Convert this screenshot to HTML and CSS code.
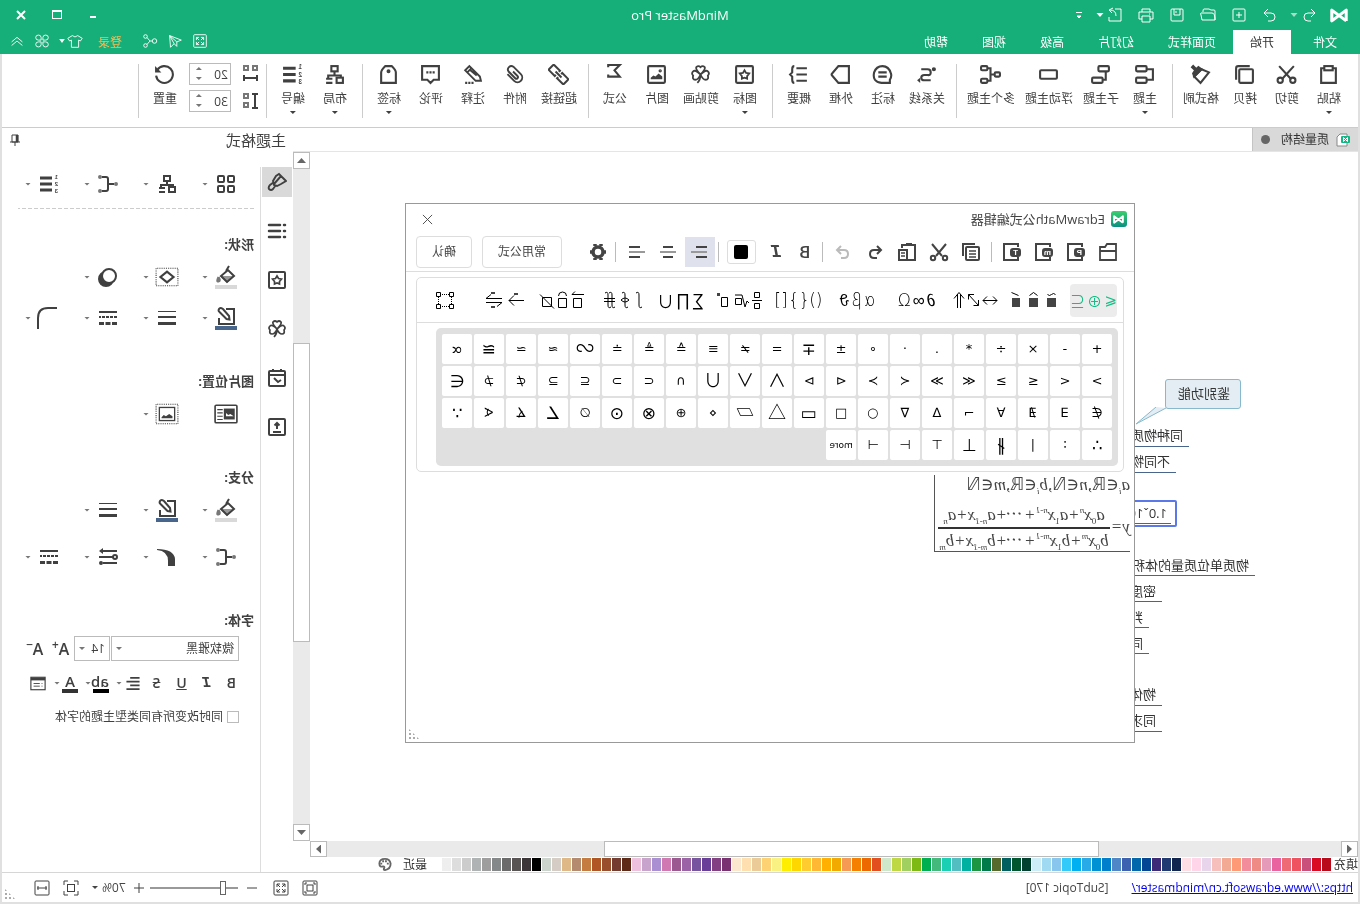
FILE: index.html
```html
<!DOCTYPE html>
<html lang="zh-CN">
<head>
<meta charset="utf-8">
<title>MindMaster Pro</title>
<link rel="stylesheet" href="styles.css">
</head>
<body>
<svg class="sprite" aria-hidden="true">
  <symbol id="logo" viewBox="0 0 20 16"><path d="M2 14V2l16 12V2L2 14" fill="none" stroke="currentColor" stroke-width="3.4" stroke-linejoin="round"/></symbol>
  <symbol id="undo" viewBox="0 0 20 20"><path d="M8 4 4 8l4 4M4 8h7q4 0 4 4t-4 4H8"/></symbol>
  <symbol id="redo" viewBox="0 0 20 20"><path d="m12 4 4 4-4 4m4-4H9q-4 0-4 4t4 4h3"/></symbol>
  <symbol id="new" viewBox="0 0 20 20"><rect x="4" y="4" width="12" height="12" rx="1"/><path d="M10 7v6M7 10h6"/></symbol>
  <symbol id="open" viewBox="0 0 20 20"><path d="M3 15V6q0-1 1-1h3l2-1h5q1 0 1 2v1M3 15q0-7 3-7h11q1 0 0 2l-1 5z"/></symbol>
  <symbol id="save" viewBox="0 0 20 20"><rect x="4" y="4" width="12" height="12" rx="1"/><path d="M7 4v6h6V4M11 6v2"/></symbol>
  <symbol id="print" viewBox="0 0 20 20"><path d="M6 7V4h8v3M6 14H3V7h14v7h-3M6 11h8v6H6zM6 9h1"/></symbol>
  <symbol id="export" viewBox="0 0 20 20"><path d="M10 4H4v12h12v-4M9 11q0-6 6-6m-3-2 4 2-3 3"/></symbol>
  <symbol id="custom" viewBox="0 0 10 10"><path d="M2 2.500h6M3 6h4L5 8z" fill="currentColor"/></symbol>
  <symbol id="full" viewBox="0 0 20 20"><rect x="3" y="3" width="14" height="14" rx="1"/><path d="M6 9V6h3M11 6h3v3M14 11v3h-3M9 14H6v-3M6 6l3 3M14 6l-3 3M14 14l-3-3M6 14l3-3"/></symbol>
  <symbol id="send" viewBox="0 0 20 20"><path d="m16 4-1 13-4-4-3 3v-5L3 9zM8 11l8-7-5 9"/></symbol>
  <symbol id="share" viewBox="0 0 20 20"><circle cx="5" cy="10" r="2.500"/><circle cx="15" cy="5" r="2"/><circle cx="15" cy="15" r="2"/><path d="M7.500 10H10l3.500-4M10 10l3.500 4"/></symbol>
  <symbol id="shirt" viewBox="0 0 20 20"><path d="M7 4 2 7l2 3 2-1v8h8V9l2 1 2-3-5-3q-3 3-6 0z"/></symbol>
  <symbol id="apps" viewBox="0 0 20 20"><path d="M9 9H6a3 2.800 0 1 1 3-3zM11 9h3a3 2.800 0 1 0-3-3zM9 11H6a3 2.800 0 1 0 3 3zM11 11h3a3 2.800 0 1 1-3 3z"/></symbol>
  <symbol id="chev" viewBox="0 0 20 20"><path d="m4 11 6-5 6 5M4 15l6-5 6 5"/></symbol>

  <symbol id="paste" viewBox="0 0 20 20"><path d="M6 4H3v14h14V4h-3"/><rect x="6" y="2" width="8" height="4"/></symbol>
  <symbol id="cut" viewBox="0 0 20 20"><path d="m3 2 11 12M17 2 6 14"/><circle cx="4" cy="15.500" r="2.500"/><circle cx="16" cy="15.500" r="2.500"/></symbol>
  <symbol id="copy" viewBox="0 0 20 20"><rect x="2" y="5" width="13" height="13" rx="1"/><path d="M5 2h11q2 0 2 2v11"/></symbol>
  <symbol id="brush" viewBox="0 0 20 20"><path d="m2 8 7-3 7 7-6 6z"/><path d="m9 5 3-2 2 2 3-3 1 1-3 3 2 3-1 3z" fill="currentColor"/></symbol>
  <symbol id="topic" viewBox="0 0 20 20"><rect x="8" y="2" width="10" height="5" rx="1"/><rect x="8" y="13" width="10" height="5" rx="1"/><path d="M8 5H2v10h6"/></symbol>
  <symbol id="subtopic" viewBox="0 0 20 20"><rect x="2" y="2" width="10" height="5" rx="1"/><rect x="8" y="13" width="10" height="5" rx="1"/><path d="M5 7v8h3"/></symbol>
  <symbol id="float" viewBox="0 0 20 20"><rect x="2" y="6" width="16" height="8" rx="1"/></symbol>
  <symbol id="multi" viewBox="0 0 20 20"><rect x="1" y="8" width="5" height="4" rx="1"/><rect x="13" y="2" width="6" height="4" rx="1"/><rect x="13" y="14" width="6" height="4" rx="1"/><path d="M6 10h4M13 4h-3v12h3"/></symbol>
  <symbol id="relation" viewBox="0 0 20 20"><circle cx="3" cy="5" r="1"/><path d="M15 5H9q-3 0-3 3t3 2.500h3q3 0 3 2.500t-3 2.500H6"/><path d="m16 13 3 2.500-3 2.500z" fill="currentColor" stroke="none"/></symbol>
  <symbol id="callout" viewBox="0 0 20 20"><path d="M3 15q-2-3-1-6 2-7 8-7t8 6q2 9-7 10H3zM6 8h8M6 12h8"/></symbol>
  <symbol id="outline" viewBox="0 0 20 20"><path d="M2 2h10l6 7q1 1 0 2l-6 7H2z"/></symbol>
  <symbol id="summary" viewBox="0 0 20 20"><path d="M2 4h10M2 10h10M2 16h10M14 2q2 0 2 3v3l2 2-2 2v3q0 3-2 3"/></symbol>
  <symbol id="star" viewBox="0 0 20 20"><rect x="2" y="2" width="16" height="16" rx="1"/><path d="m10 6 1.500 2.500 3 .5-2 2.500v2.500l-2.500-1-2.500 1v-2.500l-2-2.500 3-.5z" stroke-width="1.700"/></symbol>
  <symbol id="clover" viewBox="0 0 20 20"><path d="M10 10Q5 5 6 3q2-2 4 0 2-2 4 0 1 2-4 7zM10 10q-5-5-7-3-2 2 0 4-1 4 2 4t5-5zM10 10q5-5 7-3 2 2 0 4 1 4-2 4t-5-5zM10 10q0 5 3 8" stroke-width="1.700"/></symbol>
  <symbol id="image" viewBox="0 0 20 20"><rect x="2" y="2" width="16" height="16" rx="1"/><path d="M4.500 14.500V12l3.500-3 3 3 2-1 2.500 2v1.500z" fill="currentColor" stroke="none"/><circle cx="6.500" cy="6.500" r=".6"/></symbol>
  <symbol id="sum" viewBox="0 0 20 20"><path d="M16 3V1H5l5 5-5 6h11v-2"/></symbol>
  <symbol id="link" viewBox="0 0 20 20"><g transform="rotate(45 10 10)" stroke-width="1.900"><path d="M8 8.500H6.500V1q0-1 1-1h5q1 0 1 1v7.500H12M8 11.500H6.500V19q0 1 1 1h5q1 0 1-1v-7.500H12M10 6v8"/></g></symbol>
  <symbol id="clip" viewBox="0 0 20 20"><path d="M14.500 5v9a4 4 0 0 1-9 0V4a3.300 3.300 0 0 1 6.500 0v9a1.500 1.500 0 0 1-3 0V7" transform="rotate(45 10 10)" stroke-width="1.800"/></symbol>
  <symbol id="pencil" viewBox="0 0 20 20"><path d="m2 16 1-4L13 2l4 4L7 16zM11 4l4 4M6 11l6-5" stroke-width="1.800"/><path d="M9 18h9" stroke-dasharray="2 1"/></symbol>
  <symbol id="comment" viewBox="0 0 20 20"><path d="M2 2h16v13h-5l-3 3-3-3H2zM6 8h2M9 8h2M12 8h2"/></symbol>
  <symbol id="tag" viewBox="0 0 20 20"><path d="M3 18V8q0-2 4-6h6q4 4 4 6v10z"/><circle cx="10" cy="7" r=".9"/></symbol>
  <symbol id="layout" viewBox="0 0 20 20"><rect x="7" y="2" width="6" height="5"/><path d="M10 7v4M4 13v-2h12v2M12 14h6M12 18h6"/><rect x="2" y="13" width="6" height="5"/></symbol>
  <symbol id="number" viewBox="0 0 20 20"><path d="M7 4h12M7 10h12M7 16h12" stroke-width="3"/></symbol>
  <symbol id="hspace" viewBox="0 0 20 20"><g stroke="#777"><rect x="3" y="2" width="4" height="4"/><rect x="12" y="2" width="4" height="4"/></g><path d="M2 14h15M3 11v6M16 11v6"/></symbol>
  <symbol id="vspace" viewBox="0 0 20 20"><g stroke="#777"><rect x="12" y="3" width="4" height="4"/><rect x="12" y="12" width="4" height="4"/></g><path d="M5 3v14M2 3h6M2 17h6"/></symbol>
  <symbol id="reset" viewBox="0 0 20 20"><path d="M17 6a8 8 0 1 0 1 5"/><path d="M19 2v6h-6z" fill="currentColor" stroke="none"/></symbol>
  <symbol id="doc" viewBox="0 0 14 14"><path d="M3 1h7l3 3v9H3z" fill="#fff" stroke="#888"/><rect x="0" y="3" width="9" height="7" rx="1" fill="#12b886" stroke="none"/><path d="M2.500 8.500v-4l4 4v-4l-4 4" stroke="#fff"/></symbol>
  <symbol id="pin" viewBox="0 0 12 14"><path d="M3 2h6v7H3zM1 9h10M6 9v4"/><path d="M4 2v7" stroke-width="2.500"/></symbol>

  <symbol id="format" viewBox="0 0 20 20"><path d="m1 9 7-7 3 2 3 5-1 4-3 1-4-2zM6 4l7 8M13 10l4 3q2 2 1 4-2 2-4 0l-3-4" stroke-width="1.900"/></symbol>
  <symbol id="list" viewBox="0 0 20 20"><path d="M2 4h1M2 10h1M2 16h1M7 4h11M7 10h11M7 16h11" stroke-width="2.500" stroke-linecap="round"/></symbol>
  <symbol id="cal" viewBox="0 0 20 20"><rect x="2" y="3" width="16" height="15" rx="1"/><path d="M2 7h16M6 1v2M14 1v2m-8 9 3 2 4-4"/></symbol>
  <symbol id="up" viewBox="0 0 20 20"><rect x="2" y="2" width="16" height="16" rx="1"/><path d="M6 15h8M10 12V7M7.500 8.500 10 6l2.500 2.500"/></symbol>
  <symbol id="theme" viewBox="0 0 20 20"><rect x="2" y="2" width="6" height="6" rx="1"/><rect x="12" y="2" width="6" height="6" rx="1"/><rect x="2" y="12" width="6" height="6" rx="1"/><rect x="12" y="12" width="6" height="6" rx="1"/></symbol>
  <symbol id="branch" viewBox="0 0 20 20"><path d="M4 10h6M16 3h-4q-2 0-2 2v10q0 2 2 2h4"/><g stroke="#777"><circle cx="2" cy="10" r="1"/><circle cx="18" cy="3" r="1"/><circle cx="18" cy="17" r="1"/></g></symbol>
  <symbol id="fill" viewBox="0 0 24 24"><path d="M4 11h14l-7 7z" fill="#999" stroke="none"/><path d="m4 11 6-6 7 6-6 6zM9 1l3 5"/><path d="M19.500 12q-2.500 4 0 4.500t0-4.500" fill="#777" stroke="#777"/><path d="M1 22h22" stroke="#d9d9d9" stroke-width="4"/></symbol>
  <symbol id="line" viewBox="0 0 24 24"><path d="M12 3H4v15h15v-6"/><path d="m18.500 6-7 7-3 .5.500-3.500 6-7q3-2 4 0t-.5 3z"/><path d="M1 22h22" stroke="#48658c" stroke-width="4"/></symbol>
  <symbol id="shape" viewBox="0 0 22 20"><rect x="1" y="2" width="20" height="16" stroke-width="1" stroke-dasharray="1 1"/><path d="m5 10 6-5 6 5-6 5z"/></symbol>
  <symbol id="shadow" viewBox="0 0 20 20"><circle cx="12" cy="12" r="7" fill="currentColor"/><circle cx="9" cy="9" r="7" fill="#fff"/></symbol>
  <symbol id="weight" viewBox="0 0 20 20"><path d="M1 3.500h18" stroke-width="1"/><path d="M1 9h18"/><path d="M1 15.500h18" stroke-width="3"/></symbol>
  <symbol id="dash" viewBox="0 0 20 20"><path d="M1 4h18"/><path d="M1 9h18" stroke-dasharray="3 1"/><path d="M1 15.500h18" stroke-width="3" stroke-dasharray="5 1.500"/></symbol>
  <symbol id="corner" viewBox="0 0 24 24"><path d="M4 2h9q10 0 10 10v11"/></symbol>
  <symbol id="imgleft" viewBox="0 0 22 20"><rect x="1" y="2" width="20" height="16" rx="1" stroke-width="1.500"/><path d="M3 5h10v10H3z" fill="currentColor" stroke="none"/><path d="m4 12 3-2 2 1 2-2v3z" fill="#fff" stroke="none"/><path d="M14 6h5M14 9h5M14 12h5M14 15h5" stroke-width="1"/></symbol>
  <symbol id="imgbox" viewBox="0 0 22 20"><rect x="1" y="1" width="20" height="18" stroke-width="1" stroke-dasharray="1 1"/><rect x="4" y="4" width="14" height="12" stroke-width="1.200"/><path d="m6 14 0-2 3-2 3 2 2-1 2 2v1z" fill="currentColor" stroke="none"/></symbol>
  <symbol id="taper" viewBox="0 0 20 20"><path d="M2 19V12Q3 2 20 2v1Q9 4 9 14v5z" fill="currentColor" stroke="none"/></symbol>
  <symbol id="arrows" viewBox="0 0 20 20"><path d="M1 4h14M5 10h14M1 16h14"/><path d="m15 1 4 3-4 3z" fill="currentColor" stroke="none"/><circle cx="3" cy="10" r="2" fill="#fff"/><circle cx="17" cy="16" r="1" fill="currentColor"/></symbol>
  <symbol id="align" viewBox="0 0 16 16"><path d="M1 2h10M1 6h14M1 10h10M1 14h14"/></symbol>
  <symbol id="dialogicon" viewBox="0 0 18 16"><rect x="1" y="1" width="16" height="14" stroke-width="1.300"/><path d="M1 3h16" stroke-width="3"/><path d="M4 8h1M4 11h1M7 8h7M7 11h7" stroke-width="1"/></symbol>

  <symbol id="folder" viewBox="0 0 24 24"><path d="M4 20V4h9l2 3h5v13zM4 11h16" stroke-width="1.800"/></symbol>
  <symbol id="codebox" viewBox="0 0 24 24"><path d="M6 7V4h14v16H6v-3"/><rect x="4" y="9" width="9" height="7" rx="2" fill="currentColor"/></symbol>
  <symbol id="copydoc" viewBox="0 0 24 24"><path d="M20 16V4H8"/><rect x="4" y="7" width="13" height="13" rx="1"/><path d="M7 11h7M7 14h7M7 17h7" stroke-width="1.500"/></symbol>
  <symbol id="scissors" viewBox="0 0 24 24"><path d="m5 4 10 12M19 4 9 16"/><circle cx="6" cy="18" r="2.200"/><circle cx="18" cy="18" r="2.200"/></symbol>
  <symbol id="pastedoc" viewBox="0 0 24 24"><path d="M12 20H4V5h13v3M7 4h6"/><rect x="12" y="10" width="8" height="10" fill="#fff"/><path d="M14 13h4M14 16h4" stroke-width="1.300"/></symbol>
  <symbol id="gear" viewBox="0 0 24 24"><circle cx="12" cy="12" r="5" stroke-width="3.500"/><path d="M9 6V4M15 6V4M9 20v-2M15 20v-2M4 12h2M18 12h2" stroke-width="3.500"/></symbol>
  <symbol id="al" viewBox="0 0 20 20"><path d="M3 5h11M3 15h11"/><path d="M3 10h16" stroke="#999"/></symbol>
  <symbol id="ac" viewBox="0 0 20 20"><path d="M5 5h10M5 15h10"/><path d="M2 10h16" stroke="#999"/></symbol>
  <symbol id="ar" viewBox="0 0 20 20"><path d="M6 5h11M6 15h11"/><path d="M1 10h16" stroke="#999"/></symbol>
  <symbol id="pal" viewBox="0 0 16 16"><path d="M8 2q6 0 6 5 0 4-4 3-2 0-1 2t-1 2Q2 13 2 7q1-5 6-5z"/><path d="M4 6h2v2H4zM6 3.500h2v2H6zM9 3.500h2v2H9zM11 6h2v2h-2z" fill="currentColor" stroke="none"/></symbol>
  <symbol id="fit" viewBox="0 0 16 16"><rect x="1" y="1" width="14" height="14" rx="1"/><rect x="5" y="5" width="6" height="6"/><path d="M3 5V3h2M11 3h2v2M13 11v2h-2M5 13H3v-2"/></symbol>
  <symbol id="center" viewBox="0 0 16 16"><path d="M1 5V1h4M11 1h4v4M15 11v4h-4M5 15H1v-4"/><rect x="4.500" y="4.500" width="7" height="7"/></symbol>
  <symbol id="fitw" viewBox="0 0 16 16"><rect x="1" y="1" width="14" height="14" rx="1"/><path d="M3 8h10M4 6v4M12 6v4"/></symbol>

  <symbol id="c-accent" viewBox="0 0 46 24"><path d="M1.500 6.500q2-2 4 0t4 0M19.500 7.500l4-3 4 3M38.500 7.500l7-3"/><path d="M1 10h9v9H1zM19 10h9v9h-9zM37 10h8v9h-8z" fill="#444" stroke="none"/></symbol>
  <symbol id="c-arrows" viewBox="0 0 46 24"><path d="M1 12.500h14M5 8.500l-4 4 4 4M11 8.500l4 4-4 4M19.500 17.500l10-11M24 6.500h5.500v5M19.500 12v5.500h5M37.500 20V6M40.500 20V6M34 10.500l5-6 5 6"/></symbol>
  <symbol id="c-frac" viewBox="0 0 46 24"><path d="M2.500 4.500h5v5h-5zM0 12.500h10M2.500 15.500h5v5h-5zM13 15l2-2 2 6 3-12h7M20.500 10.500h6v6h-6zM34.500 9.500h6v9h-6z"/><path d="M42 5h3v3h-3z" fill="#444" stroke="none"/></symbol>
  <symbol id="c-int" viewBox="0 0 46 24"><path d="M8 5q-3-2-3 2v10q0 4-3 2M22 5q-3-2-3 2v10q0 4-3 2M15 12q4-4 8 0-4 4-8 0M35 5q-3-2-3 2v10q0 4-3 2M39 5q-3-2-3 2v10q0 4-3 2M29 10.500h11M29 13.500h11"/></symbol>
  <symbol id="c-deco" viewBox="0 0 46 24"><path d="M3.500 10.500h8v9h-8zM1 6.500h12M10 3.500l3 3M18.500 10.500h8v9h-8zM18.500 8q0-4 4-4t4 4M33.500 9.500h9v9h-9zM31 20.500l14-14"/></symbol>
  <symbol id="c-longarrow" viewBox="0 0 46 24"><path d="M2 12.500h15M12 7.500l5 5-5 5M24 10.500h16l-5-4M24 14.500h16M24 14.500l5 4"/><path d="M8 5h4v2H8zM31 4h4v2h-4zM31 18h4v2h-4z" fill="#444" stroke="none"/></symbol>
  <symbol id="c-matrix" viewBox="0 0 46 24"><path d="M13.500 4.500h4v4h-4zM26.500 4.500h4v4h-4zM13.500 16.500h4v4h-4zM26.500 16.500h4v4h-4z"/><path d="M18 6.500h8M18 18.500h8M15.500 9v7M28.500 9v7" stroke-dasharray="1 1"/></symbol>
</svg>

<div class="app">
  <header class="header">
    <div class="titlebar">
      <div class="quick">
        <svg class="logo"><use href="#logo"/></svg>
        <span class="pair first"><button class="ib" aria-label="撤销"><svg><use href="#undo"/></svg></button><i class="caret dim"></i></span>
        <button class="ib" aria-label="重做"><svg><use href="#redo"/></svg></button>
        <button class="ib" aria-label="新建"><svg><use href="#new"/></svg></button>
        <button class="ib" aria-label="打开"><svg><use href="#open"/></svg></button>
        <button class="ib" aria-label="保存"><svg><use href="#save"/></svg></button>
        <button class="ib" aria-label="打印"><svg><use href="#print"/></svg></button>
        <span class="pair"><button class="ib" aria-label="导出"><svg><use href="#export"/></svg></button><i class="caret"></i></span>
        <button class="ib narrow" aria-label="自定义"><svg><use href="#custom"/></svg></button>
      </div>
      <h1 class="apptitle">MindMaster Pro</h1>
      <div class="winctl">
        <button class="ib" aria-label="最小化"><svg viewBox="0 0 20 20"><path d="M7 12h6" stroke-width="2"/></svg></button>
        <button class="ib" aria-label="最大化"><svg viewBox="0 0 20 20"><rect x="5.500" y="5.500" width="9" height="8"/><path d="M5 6h10" stroke-width="2"/></svg></button>
        <button class="ib" aria-label="关闭"><svg viewBox="0 0 20 20"><path d="m6 6 8 8M14 6l-8 8" stroke-width="2"/></svg></button>
      </div>
    </div>
    <nav class="menubar">
      <div class="tabs">
        <button>文件</button><button class="on">开始</button><button>页面样式</button><button>幻灯片</button><button>高级</button><button>视图</button><button>帮助</button>
      </div>
      <div class="account">
        <button class="ib" aria-label="全屏"><svg><use href="#full"/></svg></button>
        <button class="ib" aria-label="发送"><svg><use href="#send"/></svg></button>
        <button class="ib" aria-label="分享"><svg><use href="#share"/></svg></button>
        <a class="login" href="#login">登录</a>
        <span class="pair"><button class="ib" aria-label="皮肤"><svg><use href="#shirt"/></svg></button><i class="caret"></i></span>
        <button class="ib" aria-label="应用"><svg><use href="#apps"/></svg></button>
        <button class="ib" aria-label="收起"><svg><use href="#chev"/></svg></button>
      </div>
    </nav>
  </header>

  <div class="body">
    <section class="ribbon">
      <button class="rb"><svg><use href="#paste"/></svg>粘贴<i class="caret"></i></button>
      <button class="rb"><svg><use href="#cut"/></svg>剪切</button>
      <button class="rb"><svg><use href="#copy"/></svg>拷贝</button>
      <button class="rb"><svg><use href="#brush"/></svg>格式刷</button>
      <i class="rsep"></i>
      <button class="rb"><svg><use href="#topic"/></svg>主题<i class="caret"></i></button>
      <button class="rb"><svg><use href="#subtopic"/></svg>子主题</button>
      <button class="rb"><svg><use href="#float"/></svg>浮动主题</button>
      <button class="rb"><svg><use href="#multi"/></svg>多个主题</button>
      <i class="rsep"></i>
      <button class="rb"><svg><use href="#relation"/></svg>关系线</button>
      <button class="rb"><svg><use href="#callout"/></svg>标注</button>
      <button class="rb"><svg><use href="#outline"/></svg>外框</button>
      <button class="rb"><svg><use href="#summary"/></svg>概要</button>
      <i class="rsep"></i>
      <button class="rb"><svg><use href="#star"/></svg>图标<i class="caret"></i></button>
      <button class="rb"><svg><use href="#clover"/></svg>剪贴画</button>
      <button class="rb"><svg><use href="#image"/></svg>图片</button>
      <button class="rb"><svg><use href="#sum"/></svg>公式</button>
      <i class="rsep"></i>
      <button class="rb"><svg><use href="#link"/></svg>超链接</button>
      <button class="rb"><svg><use href="#clip"/></svg>附件</button>
      <button class="rb"><svg><use href="#pencil"/></svg>注释</button>
      <button class="rb"><svg><use href="#comment"/></svg>评论</button>
      <button class="rb"><svg><use href="#tag"/></svg>标签<i class="caret"></i></button>
      <i class="rsep"></i>
      <button class="rb"><svg><use href="#layout"/></svg>布局<i class="caret"></i></button>
      <button class="rb"><svg viewBox="0 0 20 20"><use href="#number" width="20" height="20"/><text x="1" y="5">1</text><text x="1" y="12">2</text><text x="1" y="19">3</text></svg>编号<i class="caret"></i></button>
      <i class="rsep"></i>
      <div class="spins">
        <label class="spin"><svg><use href="#hspace"/></svg><input type="text" value="20" aria-label="水平间距"><span class="steps"><i></i><i></i></span></label>
        <label class="spin"><svg><use href="#vspace"/></svg><input type="text" value="30" aria-label="垂直间距"><span class="steps"><i></i><i></i></span></label>
      </div>
      <button class="rb"><svg><use href="#reset"/></svg>重置</button>
      <i class="rsep"></i>
    </section>

    <div class="workspace">
      <main class="main">
        <div class="doctabs"><button class="doctab"><svg><use href="#doc"/></svg><span>质量结构</span><i></i></button></div>
        <div class="stage">
          <div class="canvas">
            <svg class="tail" viewBox="0 0 50 22"><path d="M2 1 32 17 12 0" fill="#e3edf3" stroke="#86b9cb"/></svg>
            <div class="note">鉴别功能</div>
            <div class="node n1">同种物质</div>
            <div class="node n2">不同物质</div>
            <div class="node n3"><span>1.0ˇ10</span></div>
            <div class="node n4">物质单位质量的体积</div>
            <div class="node n5">密度</div>
            <div class="node n6">判断</div>
            <div class="node n7">同种</div>
            <div class="node n8">物体</div>
            <div class="node n9">同求</div>
          </div>
          <div class="vscroll"><button class="sbtn" aria-label="向上"><i class="tri up"></i></button><div class="vtrack"><div class="vthumb"></div></div><button class="sbtn" aria-label="向下"><i class="tri down"></i></button></div>
        </div>
        <div class="hscroll"><button class="sbtn" aria-label="向左"><i class="tri left"></i></button><div class="htrack"><div class="hthumb"></div></div><button class="sbtn" aria-label="向右"><i class="tri right"></i></button></div>
        <div class="palette"><span class="plabel">填充</span><div class="swatches" id="swatches"></div><span class="recent">最近</span><button class="ib" aria-label="调色板"><svg><use href="#pal"/></svg></button></div>
      </main>

      <aside class="side">
        <div class="sidehead"><h2>主题格式</h2><button class="ib" aria-label="固定"><svg><use href="#pin"/></svg></button></div>
        <div class="sidebody">
          <div class="strip">
            <button class="on" aria-label="格式"><svg><use href="#format"/></svg></button>
            <button aria-label="大纲"><svg><use href="#list"/></svg></button>
            <button aria-label="图标"><svg><use href="#star"/></svg></button>
            <button aria-label="剪贴画"><svg><use href="#clover"/></svg></button>
            <button aria-label="任务"><svg><use href="#cal"/></svg></button>
            <button aria-label="导出"><svg><use href="#up"/></svg></button>
          </div>
          <div class="props">
            <div class="row">
              <button class="tool"><svg><use href="#theme"/></svg><i class="caret"></i></button><button class="tool"><svg><use href="#layout"/></svg><i class="caret"></i></button><button class="tool"><svg><use href="#branch"/></svg><i class="caret"></i></button><button class="tool"><svg viewBox="0 0 20 20"><use href="#number" width="20" height="20"/><text x="1" y="5">1</text><text x="1" y="12">2</text><text x="1" y="19">3</text></svg><i class="caret"></i></button>
            </div>
            <hr>
            <h3 class="first">形状:</h3>
            <div class="row">
              <button class="tool"><svg class="wide"><use href="#fill"/></svg><i class="caret"></i></button><button class="tool"><svg class="wide"><use href="#shape"/></svg><i class="caret"></i></button><button class="tool"><svg><use href="#shadow"/></svg><i class="caret"></i></button>
            </div>
            <div class="row near">
              <button class="tool"><svg class="wide"><use href="#line"/></svg><i class="caret"></i></button><button class="tool"><svg><use href="#weight"/></svg><i class="caret"></i></button><button class="tool"><svg><use href="#dash"/></svg><i class="caret"></i></button><button class="tool"><svg class="wide"><use href="#corner"/></svg><i class="caret"></i></button>
            </div>
            <h3>图片位置:</h3>
            <div class="row">
              <button class="tool"><svg class="wide"><use href="#imgleft"/></svg></button><button class="tool"><svg class="wide"><use href="#imgbox"/></svg><i class="caret"></i></button>
            </div>
            <h3>分支:</h3>
            <div class="row">
              <button class="tool"><svg class="wide"><use href="#fill"/></svg><i class="caret"></i></button><button class="tool"><svg class="wide"><use href="#line"/></svg><i class="caret"></i></button><button class="tool"><svg><use href="#weight"/></svg><i class="caret"></i></button>
            </div>
            <div class="row far">
              <button class="tool"><svg><use href="#branch"/></svg><i class="caret"></i></button><button class="tool"><svg><use href="#taper"/></svg><i class="caret"></i></button><button class="tool"><svg><use href="#arrows"/></svg><i class="caret"></i></button><button class="tool"><svg><use href="#dash"/></svg><i class="caret"></i></button>
            </div>
            <h3>字体:</h3>
            <div class="fonts">
              <span class="sel family"><select aria-label="字体"><option>微软雅黑</option></select><i class="caret"></i></span>
              <span class="sel size"><select aria-label="字号"><option>14</option></select><i class="caret"></i></span>
              <button class="grow" aria-label="增大字号">A<sup>+</sup></button>
              <button class="grow" aria-label="减小字号">A<sup>−</sup></button>
            </div>
            <div class="marks">
              <button class="m">B</button><button class="m it">I</button><button class="m un">U</button><button class="m st">S</button>
              <span class="pair"><button class="m" aria-label="对齐"><svg><use href="#align"/></svg></button><i class="caret"></i></span>
              <span class="pair"><button class="m bar black">ab</button><i class="caret"></i></span>
              <span class="pair"><button class="m bar">A</button><i class="caret"></i></span>
              <button class="m" aria-label="更多"><svg><use href="#dialogicon"/></svg></button>
            </div>
            <label class="check"><input type="checkbox">同时改变所有同类型主题的字体</label>
          </div>
        </div>
      </aside>
    </div>

    <footer class="status">
      <a href="https://www.edrawsoft.cn/mindmaster/">https://www.edrawsoft.cn/mindmaster/</a>
      <span>[SubTopic 170]</span>
      <div class="zoom">
        <button class="ib" aria-label="适合窗口"><svg><use href="#fit"/></svg></button>
        <button class="ib fs" aria-label="全屏"><svg viewBox="2 2 16 16"><use href="#full" width="20" height="20"/></svg></button>
        <button class="ib" aria-label="缩小"><svg viewBox="0 0 16 16"><path d="M3 8h10"/></svg></button>
        <input type="range" min="0" max="100" value="14" aria-label="缩放">
        <button class="ib plus" aria-label="放大"><svg viewBox="0 0 16 16"><path d="M3 8h10M8 3v10"/></svg></button>
        <span class="pct">70%<i class="caret"></i></span>
        <button class="ib mid" aria-label="居中"><svg><use href="#center"/></svg></button>
        <button class="ib" aria-label="适合宽度"><svg><use href="#fitw"/></svg></button>
      </div>
      <i class="grip"></i>
    </footer>
  </div>

  <div class="dialog" role="dialog" aria-label="EdrawMath公式编辑器">
    <div class="dtitle"><span class="dlogo"><svg><use href="#logo"/></svg></span><span>EdrawMath公式编辑器</span><button class="close" aria-label="关闭"><svg viewBox="0 0 12 12"><path d="m1 1 10 10M11 1 1 11"/></svg></button></div>
    <div class="dtools">
      <div class="grp">
        <button class="dt" aria-label="打开"><svg><use href="#folder"/></svg></button>
        <button class="dt" aria-label="导出 PNG"><svg><use href="#codebox"/><text x="6" y="15">P</text></svg></button>
        <button class="dt" aria-label="导出 MathML"><svg><use href="#codebox"/><text x="5" y="15">m</text></svg></button>
        <button class="dt" aria-label="导出 TeX"><svg><use href="#codebox"/><text x="6" y="15">T</text></svg></button>
      </div>
      <i class="dsep"></i>
      <div class="grp">
        <button class="dt" aria-label="复制"><svg><use href="#copydoc"/></svg></button>
        <button class="dt" aria-label="剪切"><svg><use href="#scissors"/></svg></button>
        <button class="dt" aria-label="粘贴"><svg><use href="#pastedoc"/></svg></button>
        <button class="dt sm" aria-label="撤销"><svg><use href="#undo"/></svg></button>
        <button class="dt sm off" aria-label="重做"><svg><use href="#redo"/></svg></button>
      </div>
      <i class="dsep"></i>
      <div class="grp">
        <button class="dt b">B</button><button class="dt i">I</button>
        <button class="color" aria-label="颜色"><i></i></button>
      </div>
      <i class="dsep three"></i>
      <div class="grp aligns">
        <button class="on" aria-label="左对齐"><svg><use href="#al"/></svg></button>
        <button aria-label="居中"><svg><use href="#ac"/></svg></button>
        <button aria-label="右对齐"><svg><use href="#ar"/></svg></button>
      </div>
      <i class="dsep five"></i>
      <button class="dt" aria-label="设置"><svg><use href="#gear"/></svg></button>
      <div class="actions"><button class="common">常用公式</button><button>确认</button></div>
    </div>
    <div class="symbols">
      <div class="cats">
        <button class="on">⩽<span>⊕</span>⊆</button>
        <button aria-label="重音"><svg><use href="#c-accent"/></svg></button>
        <button aria-label="箭头"><svg><use href="#c-arrows"/></svg></button>
        <button>∂<span>∞</span>Ω</button>
        <button>α<span>β</span>ϑ</button>
        <button>(){}[]</button>
        <button aria-label="分式"><svg><use href="#c-frac"/></svg></button>
        <button>∑<span>∏</span>∪</button>
        <button aria-label="积分"><svg><use href="#c-int"/></svg></button>
        <button aria-label="上标线"><svg><use href="#c-deco"/></svg></button>
        <button aria-label="长箭头"><svg><use href="#c-longarrow"/></svg></button>
        <button aria-label="矩阵"><svg><use href="#c-matrix"/></svg></button>
      </div>
      <div class="cells" id="cells"></div>
    </div>
    <div class="formula">
      <div class="f1">a<sub>i</sub>∈<b>ℝ</b>,n∈<b>ℕ</b>,b<sub>i</sub>∈<b>ℝ</b>,m∈<b>ℕ</b></div>
      <div class="f2"><span>y=</span>
        <div class="frac">
          <div class="num">a<sub class="r">0</sub>x<sup>n</sup>+a<sub class="r">1</sub>x<sup>n-1</sup>+⋯+a<sub>n-1</sub>x+a<sub>n</sub></div>
          <div class="den">b<sub class="r">0</sub>x<sup>m</sup>+b<sub class="r">1</sub>x<sup>m-1</sup>+⋯+b<sub>m-1</sub>x+b<sub>m</sub></div>
        </div>
      </div>
    </div>
    <i class="grip"></i>
  </div>
</div>
<script src="app.js"></script>
</body>
</html>
```

FILE: styles.css
```css
* { box-sizing: border-box; }
body { margin: 0; background: #fff; color: #333; font: 12px/16px "Open Sans", "Noto Sans CJK SC", sans-serif; overflow: hidden; }
button { border: 0; padding: 0; margin: 0; background: none; color: inherit; font: inherit; }
h1, h2, h3 { margin: 0; font-weight: 400; }
svg { display: block; fill: none; stroke: currentColor; stroke-width: 2; flex: none; }
svg text { fill: currentColor; stroke: none; font: 700 6px "Liberation Sans", sans-serif; }
.sprite { position: absolute; width: 0; height: 0; }
i { font-style: normal; }

/* The window is presented right-to-left as a mirror image. */
.app { position: relative; display: flex; flex-direction: column; min-height: 100vh; transform: scaleX(-1); }

.ib { display: flex; align-items: center; justify-content: center; width: 20px; height: 20px; }
.ib svg { width: 100%; height: 100%; stroke-width: 1; }
.pair { display: flex; align-items: center; }
.caret { flex: none; width: 10px; height: 3px; background: currentColor; clip-path: polygon(20% 0, 80% 0, 50% 100%); }
.caret.dim { opacity: .6; }

.header { background: #16ae79; color: #fff; }
.titlebar { display: grid; grid-template-columns: 1fr auto 1fr; align-items: center; height: 30px; }
.quick { display: flex; align-items: center; gap: 11px; padding-left: 12px; }
.quick .first { margin-right: -2px; }
.logo { width: 18px; height: 15px; }
.ib.narrow { width: 10px; height: 10px; }
.quick .caret, .account .caret { height: 4px; clip-path: polygon(15% 0, 85% 0, 50% 100%); }
.apptitle { font-size: 13px; line-height: 20px; }
.winctl { display: flex; justify-content: flex-end; gap: 16px; padding-right: 11px; }
.menubar { display: flex; justify-content: space-between; height: 24px; }
.tabs { display: flex; padding-left: 6px; }
.tabs button { padding: 2px 17px 0; height: 24px; }
.tabs button:first-child { margin-right: 5px; }
.tabs .on { background: #fff; color: #333; }
.account { display: flex; align-items: center; gap: 7px; padding: 0 8px 2px 0; }
.account .ib { width: 18px; height: 18px; }
.account .caret { width: 8px; }
.login { margin: 4px 7px 0 12px; color: #f5bd58; text-decoration: none; }

.body { flex: 1; display: flex; flex-direction: column; min-height: 0; border: 2px solid #e0e0e0; border-top: 0; }
.ribbon { display: flex; height: 74px; padding: 10px 8px 0; border-bottom: 1px solid #ccc; color: #404040; }
.rb { display: flex; flex-direction: column; align-items: center; min-width: 42px; padding: 0 5px; height: 54px; }
.rb svg { width: 21px; height: 21px; margin-bottom: 6px; }
.rb .caret { margin-top: 4px; }
.rsep { width: 1px; height: 54px; margin: 0 6px 0 5px; background: #ccc; }
.spins { display: flex; flex-direction: column; gap: 5px; padding: 0 3px 0 0; margin-top: -1px; }
.spin { display: flex; align-items: center; position: relative; }
.spin svg { width: 20px; height: 20px; margin-right: 9px; }
.spin input { width: 42px; height: 22px; padding: 0 0 0 2px; border: 1px solid #bbb; font: inherit; color: #404040; }
.steps { position: absolute; right: 7px; top: 4px; display: grid; gap: 7px; }
.steps i { width: 6px; height: 3px; background: #777; clip-path: polygon(0 0, 100% 0, 50% 100%); }
.steps i:first-child { clip-path: polygon(50% 0, 100% 100%, 0 100%); }

.workspace { flex: 1; display: flex; min-height: 0; }
.main { flex: 1; min-width: 0; display: flex; flex-direction: column; }
.doctabs { height: 24px; border-bottom: 1px solid #e5e5e5; }
.doctab { display: flex; align-items: center; gap: 7px; height: 23px; width: 106px; padding-left: 8px; background: #d9d9d9; border-right: 1px solid #c4c4c4; }
.doctab svg { width: 14px; height: 14px; stroke-width: 1; }
.doctab i { width: 9px; height: 9px; border-radius: 50%; background: #666; margin-left: 4px; }
.stage { flex: 1; display: flex; min-height: 0; }
.canvas { flex: 1; position: relative; overflow: hidden; font-size: 13px; line-height: 18px; color: #333; white-space: nowrap; }
.note { position: absolute; left: 117px; top: 227px; width: 76px; height: 30px; padding-left: 10px; line-height: 27px; background: #e3edf3; border: 1px solid #86b9cb; border-radius: 3px; }
.tail { position: absolute; left: 190px; top: 255px; width: 50px; height: 22px; z-index: 1; stroke-width: 1; }
.node { position: absolute; width: 260px; height: 21px; padding-left: 6px; border-bottom: 1px solid #48658c; }
.n1 { left: 169px; top: 274px; }
.n2 { left: 182px; top: 300px; }
.n3 { left: 181px; top: 348px; height: 27px; padding: 2px 4px; border: 2px solid #5b78e8; border-radius: 2px; }
.n3 span { display: block; height: 20px; padding-left: 4px; border-bottom: 1px solid #48658c; }
.n4 { left: 103px; top: 403px; line-height: 20px; }
.n5 { left: 196px; top: 429px; line-height: 20px; }
.n6 { left: 209px; top: 455px; line-height: 20px; }
.n7 { left: 209px; top: 481px; line-height: 20px; }
.n8 { left: 196px; top: 533px; }
.n9 { left: 196px; top: 559px; }

.sbtn { flex: none; display: grid; place-items: center; width: 17px; height: 17px; border: 1px solid #bbb; background: #fff; }
.tri { width: 9px; height: 5px; background: #666; }
.up { clip-path: polygon(50% 0, 100% 100%, 0 100%); }
.down { clip-path: polygon(0 0, 100% 0, 50% 100%); }
.left, .right { width: 5px; height: 9px; }
.left { clip-path: polygon(0 50%, 100% 0, 100% 100%); }
.right { clip-path: polygon(0 0, 100% 50%, 0 100%); }
.vscroll { display: flex; flex-direction: column; width: 17px; background: #eaeaea; }
.vtrack { flex: 1; padding-top: 174px; }
.vthumb { height: 299px; background: #fff; border: 1px solid #bbb; }
.hscroll { display: flex; height: 16px; margin-right: 17px; background: #eaeaea; }
.hscroll .sbtn { height: 16px; }
.htrack { flex: 1; padding-left: 242px; }
.hthumb { width: 495px; height: 16px; background: #fff; border: 1px solid #bbb; }
.palette { display: flex; align-items: center; height: 15px; }
.plabel { width: 27px; }
.swatches { display: flex; gap: 1px; }
.swatches button { width: 9px; height: 13px; }
.recent { margin: 0 10px 0 15px; }
.palette .ib { width: 16px; height: 15px; color: #666; }
.palette .ib svg { stroke-width: 2; }

.side { width: 291px; display: flex; flex-direction: column; color: #404040; }
.sidehead { display: flex; justify-content: space-between; align-items: center; height: 24px; padding: 0 7px; }
.sidehead h2 { font-size: 15px; line-height: 22px; }
.sidehead .ib { width: 12px; height: 14px; }
.sidehead .ib svg { stroke-width: 1; }
.sidebody { flex: 1; display: flex; padding-top: 15px; }
.strip { display: flex; flex-direction: column; gap: 19px; width: 33px; padding-left: 1px; border-right: 1px solid #ddd; }
.strip button { display: grid; place-items: center; width: 30px; height: 30px; }
.strip .on { background: #d9d9d9; }
.strip svg { width: 20px; height: 20px; }
.props { flex: 1; padding: 2px 16px 0 6px; }
.props hr { height: 1px; margin: 9px 0 0; border: 0; background: repeating-linear-gradient(90deg, #ccc 0 4px, transparent 4px 6px); }
.props h3 { margin: 38px 0 8px; font-size: 13px; font-weight: 700; line-height: 20px; }
.props h3.first { margin-top: 25px; }
.row { display: flex; }
.row.near { margin-top: 11px; }
.row.far { margin-top: 17px; }
.tool { display: flex; align-items: center; width: 59px; height: 30px; padding-left: 18px; }
.tool svg { width: 20px; height: 20px; margin-right: 6px; }
.tool svg.wide { width: 24px; height: 24px; margin: 0 4px 0 -2px; }
.tool .caret, .marks .caret, .sel .caret { background: #777; }
.fonts { display: flex; align-items: center; gap: 1px; padding-left: 15px; margin-right: -10px; margin-top: -2px; }
.sel { position: relative; }
.sel select { appearance: none; width: 100%; height: 25px; padding: 0 0 0 4px; border: 1px solid #bbb; border-radius: 0; background: #fff; font: inherit; color: #404040; }
.sel .caret { position: absolute; right: 3px; top: 11px; }
.family { width: 128px; }
.size { width: 36px; }
.grow { width: 25px; font-size: 16px; font-weight: 600; line-height: 20px; }
.grow sup { font-size: 12px; line-height: 1px; }
.marks { display: flex; align-items: center; margin: 12px -6px 0 10px; }
.m { width: 25px; height: 20px; font-weight: 600; font-size: 14px; line-height: 18px; text-align: center; display: grid; place-items: center; }
.m svg { width: 16px; height: 15px; }
.it { font: italic 700 15px "Liberation Mono", monospace; }
.un { text-decoration: underline; }
.st { text-decoration: line-through; }
.marks .pair .m { width: 18px; margin-left: 2px; }
.m.bar { font-size: 15px; line-height: 14px; border-bottom: 4px solid #333; height: 19px; }
.marks .pair .bar { width: 16px; margin-left: 5px; }
.m.bar.black { border-color: #000; }
.marks > .m:last-child { width: 28px; }
.check { display: flex; align-items: center; gap: 4px; padding-left: 15px; margin-top: 16px; white-space: nowrap; }
.check input { appearance: none; width: 12px; height: 12px; margin: 0; border: 1px solid #bbb; background: #fff; }

.status { position: relative; display: flex; align-items: center; height: 30px; padding: 0 32px 0 5px; border-top: 1px solid #d6d6d6; color: #444; }
.status a { color: #00e; margin-right: 23px; }
.zoom { display: flex; align-items: center; margin-left: auto; gap: 8px; }
.zoom .ib { width: 16px; height: 16px; color: #404040; }
.zoom .ib:nth-child(n+2) { margin-left: 5px; }
.zoom .ib.plus { margin-left: -5px; }
.zoom .ib.mid { margin-left: 3px; }
.zoom input { appearance: none; width: 88px; height: 14px; margin: 0 0 0 -2px; background: linear-gradient(#999, #999) center / 100% 2px no-repeat; }
.zoom input::-webkit-slider-thumb { appearance: none; width: 6px; height: 14px; border: 1px solid #666; background: #fff; }
.pct { display: flex; align-items: center; gap: 2px; margin-left: -3px; }
.grip { position: absolute; right: 2px; bottom: 2px; width: 12px; height: 12px; background: radial-gradient(circle, #aaa 1px, transparent 1px) 0 0 / 4px 4px; clip-path: polygon(100% 0, 100% 100%, 0 100%); }

.dialog { position: absolute; left: 225px; top: 203px; width: 730px; height: 540px; background: #fff; border: 1px solid #999; color: #444; }
.dtitle { display: flex; align-items: center; gap: 6px; height: 30px; padding: 0 16px 0 7px; font-size: 13px; line-height: 20px; }
.dlogo { display: grid; place-items: center; width: 16px; height: 16px; border-radius: 3px; background: linear-gradient(#3ccf70, #0a8f80); color: #fff; }
.dlogo svg { width: 11px; height: 9px; }
.close { margin-left: auto; }
.close svg { width: 11px; height: 11px; stroke-width: 1; }
.dtools { display: flex; align-items: center; height: 38px; padding: 0 10px 1px 14px; border-bottom: 1px solid #ddd; }
.grp { display: flex; align-items: center; gap: 8px; }
.dt { display: grid; place-items: center; width: 24px; height: 24px; }
.dt svg { width: 24px; height: 24px; }
.dt.sm svg { width: 20px; height: 20px; }
.dt text { fill: #fff; font-size: 8px; font-weight: 700; }
.dt.off { color: #bbb; }
.dt.b { width: 18px; font-size: 17px; font-weight: 600; }
.dt.i { font: italic 700 18px "Liberation Mono", monospace; }
.dsep { width: 1px; height: 20px; margin: 0 8px; background: #bbb; }
.dsep.three { margin-right: 3px; }
.dsep.five { margin: 0 5px; }
.color { display: grid; place-items: center; width: 29px; height: 24px; border: 1px solid #ddd; border-radius: 3px; }
.color i { width: 14px; height: 14px; border-radius: 2px; background: #000; }
.aligns { gap: 2px; }
.aligns button { display: grid; place-items: center; width: 30px; height: 30px; }
.aligns .on { background: #dfe1ed; }
.aligns svg { width: 20px; height: 20px; }
.actions { display: flex; gap: 10px; margin-left: auto; }
.actions button { width: 56px; height: 32px; border: 1px solid #ddd; border-radius: 4px; }
.actions .common { width: 80px; }
.symbols { margin: 5px 10px 3px; border: 1px solid #ddd; border-radius: 5px; }
.cats { display: flex; align-items: center; gap: 12px; height: 45px; padding: 0 6px; border-bottom: 1px solid #ddd; color: #000; }
.cats button { display: flex; align-items: center; justify-content: center; flex: none; width: 47px; height: 33px; border-radius: 4px; font: 200 17px "DejaVu Sans", sans-serif; white-space: nowrap; }
.cats span { margin: 0 2px; }
.cats .on { background: #ececec; color: #16bd86; font-size: 15px; }
.cats svg { width: 46px; height: 24px; stroke-width: 1; }
.cells { display: grid; grid-template-columns: repeat(21, 30px); gap: 2px; width: max-content; margin: 5px; padding: 6px; border-radius: 5px; background: #e0e0e0; }
.cells button { height: 30px; border-radius: 2px; background: #fff; color: #000; font: 400 13px/28px "DejaVu Sans", sans-serif; }
.cells .big { font-size: 17px; }
.cells .thin { font-size: 18px; font-weight: 200; }
.cells .word { font-size: 9px; }
.formula { width: 196px; height: 77px; margin-left: 4px; border: 1px solid #555; border-width: 0 1px 1px 0; font: italic 17px/18px "Liberation Serif", "DejaVu Serif", serif; white-space: nowrap; }
.formula sub, .formula sup { font-size: 9px; line-height: 1px; }
.formula .r { font-style: normal; }
.formula b { font: normal 18px/18px "DejaVu Sans", sans-serif; }
.f2 { display: flex; align-items: center; margin-top: 8px; }
.frac { flex: 1; margin: 0 3px 0 1px; text-align: center; }
.num { height: 27px; line-height: 26px; border-bottom: 2px solid #333; }
.den { line-height: 23px; }
```

FILE: app.js
```js
const colors = ("b8091b d90b24 c9507a ef5360 ee6a74 e963a0 e59ab9 ee8b85 f28e9c ff9a76 f3aa94 f6bfbc e9d5eb ffd5ea ffdfe6 " +
  "10264f 213a72 3d2b78 034694 0267ab 3d63b0 4f86c8 0080cc 0091d5 28a9e8 00b0f0 33c9f9 88c6ee a0daf2 cdeef8 " +
  "02402f 00572f 006060 576a2e 007a48 1c9642 00b0a0 52bec2 1bcfb4 44b97c 00b050 7dba14 a2d060 bdd842 cfe8cb " +
  "e24e1e ee6800 f58000 f49a55 f2a900 ffb000 ffb834 ffcc30 ffd700 ffee00 f9f283 fdd272 ebcc98 fddfb0 fce7cf " +
  "7a3172 824082 693e98 78549e 9b62a5 9c5890 cf78b2 aa8fd2 c8a4cc eec2de " +
  "5e2a18 743c2e 9a4f2c b05524 c47c40 b58b70 deb887 d5ccc6 ccd3cc " +
  "000000 3c3638 585454 6b6b6b 858888 9e9e9e b0b3b3 cccccc dddddd eeeeee").split(" ");
const swatches = document.getElementById("swatches");
for (const c of colors) {
  const b = document.createElement("button");
  b.style.background = "#" + c;
  b.setAttribute("aria-label", "#" + c);
  swatches.append(b);
}

const symbols = ("+ - × ÷ * . · ∘ ± ∓ = ≠ ≡ ≙ ≜ ≐ ∽ ≈ ≃ ≅ ∝ " +
  "> < ≤ ≥ ≪ ≫ ≺ ≻ ⊲ ⊳ ∧ ∨ ∪ ∩ ⊂ ⊃ ⊆ ⊇ ⊄ ⊅ ∈ " +
  "∉ ∃ ∄ ∀ ¬ ∆ ∇ ○ □ ▭ △ ▱ ⋄ ⊕ ⊗ ⊙ ∅ ∠ ∡ ∢ ∵ " +
  "∴ ∶ ∣ ∦ ⊥ ⊤ ⊢ ⊣ more").split(" ");
const large = "∓≅∝∈▭⊗⊙∠∵∴∦⊥";
const thin = "∽∧∨∪△▱";
const cells = document.getElementById("cells");
for (const s of symbols) {
  const b = document.createElement("button");
  b.textContent = s;
  if (s === "more") b.className = "word";
  else if (large.includes(s)) b.className = "big";
  else if (thin.includes(s)) b.className = "thin";
  cells.append(b);
}
```
